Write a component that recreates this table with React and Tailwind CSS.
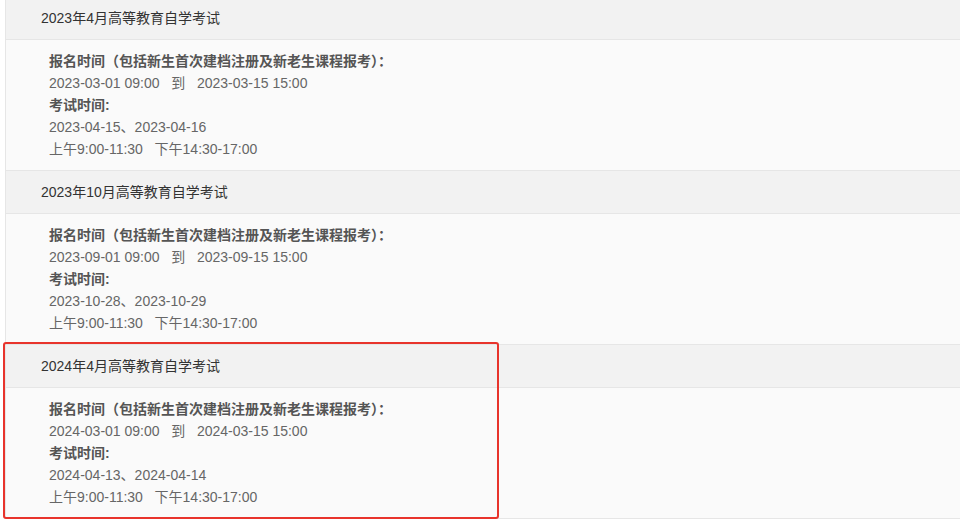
import React from "react";

const sections = [
  {
    title: "2023年4月高等教育自学考试",
    reg: ["2023-03-01 09:00", "2023-03-15 15:00"],
    exam: "2023-04-15、2023-04-16",
  },
  {
    title: "2023年10月高等教育自学考试",
    reg: ["2023-09-01 09:00", "2023-09-15 15:00"],
    exam: "2023-10-28、2023-10-29",
  },
  {
    title: "2024年4月高等教育自学考试",
    reg: ["2024-03-01 09:00", "2024-03-15 15:00"],
    exam: "2024-04-13、2024-04-14",
  },
];

export default function App() {
  return (
    <div
      className="relative w-[960px] h-[532px] overflow-hidden bg-white"
      style={{ fontFamily: '"Liberation Sans", Arial, "Noto Sans CJK SC", sans-serif' }}
    >
      <div className="ml-[5px] -mt-[3px] border-l border-[#e6e6e6] w-[1000px]">
        {sections.map((s, i) => (
          <div key={i}>
            <div className="h-[43px] bg-[#f2f2f2] border-b border-[#e6e6e6] flex items-center pl-[35px] text-[14px] text-[#333]">
              {s.title}
            </div>
            <div className="bg-[#fafafa] border-b border-[#e6e6e6] pl-[43px] py-[10px] text-[14px] leading-[22px] text-[#666]">
              <div className="font-bold text-[#555]">报名时间（包括新生首次建档注册及新老生课程报考）：</div>
              <div className="whitespace-pre">
                {s.reg[0]}{"   到   "}{s.reg[1]}
              </div>
              <div className="font-bold text-[#555]">考试时间:</div>
              <div>{s.exam}</div>
              <div className="whitespace-pre">{"上午9:00-11:30   下午14:30-17:00"}</div>
            </div>
          </div>
        ))}
      </div>
      <div className="absolute left-[3px] top-[342px] w-[496px] h-[177px] border-[2.5px] border-[#e8342c] rounded-[3px] pointer-events-none" />
    </div>
  );
}
